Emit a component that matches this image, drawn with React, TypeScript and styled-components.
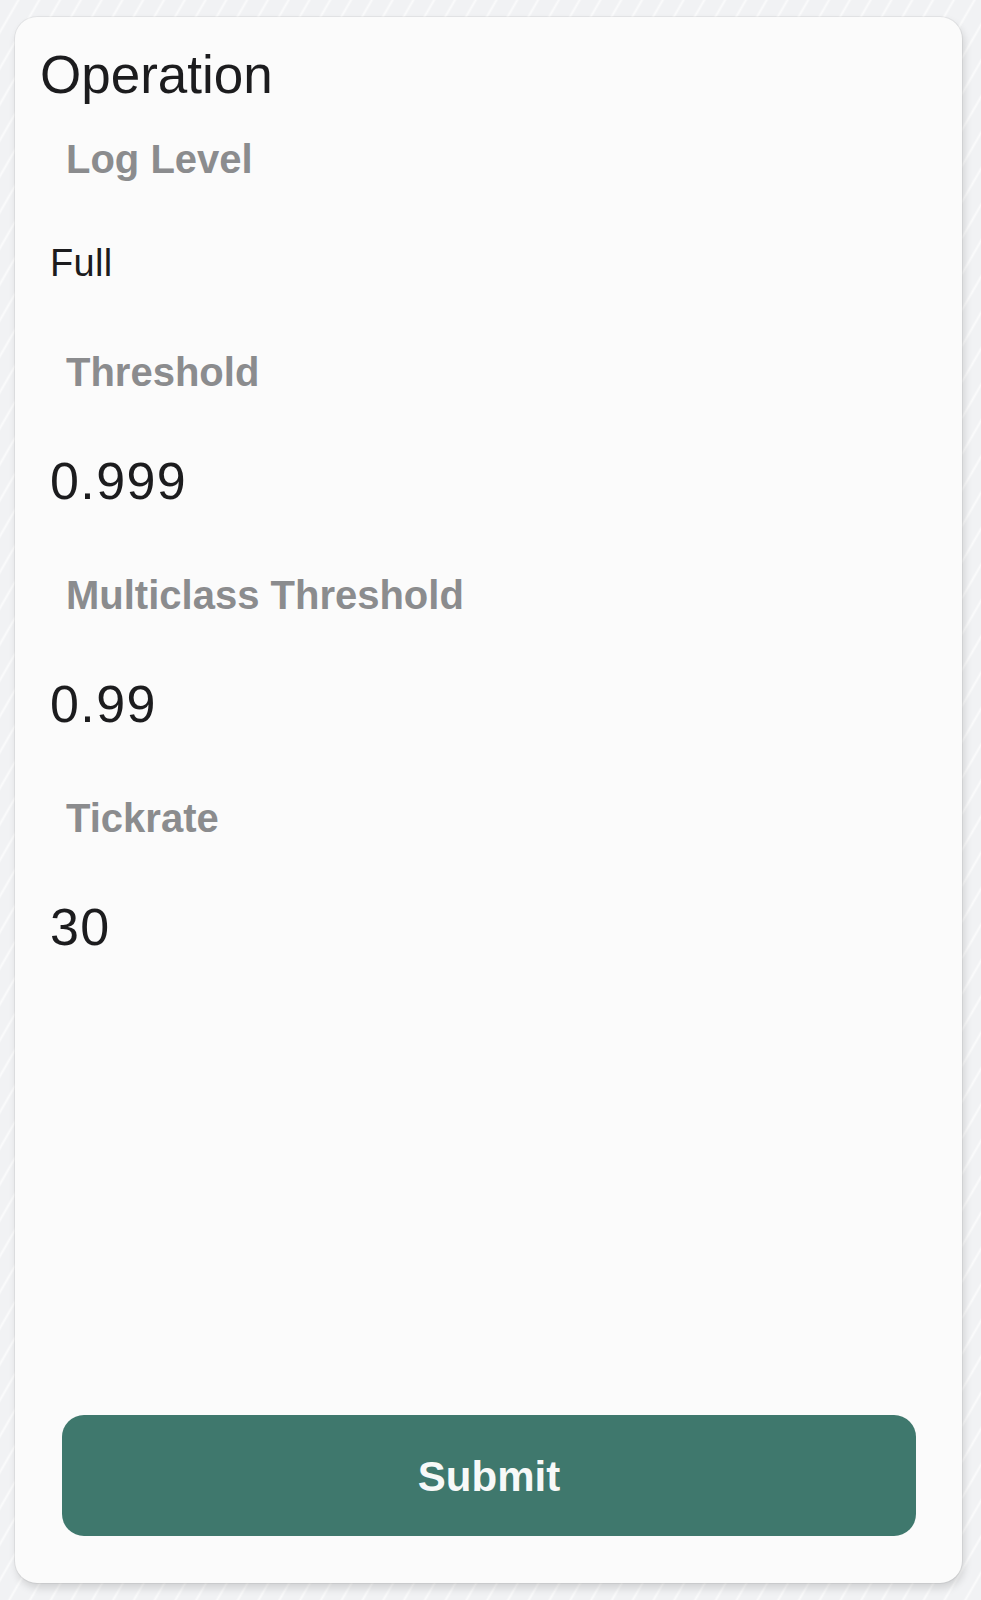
import styled, { createGlobalStyle } from 'styled-components';

const GlobalStyle = createGlobalStyle`
  html, body {
    margin: 0;
    padding: 0;
  }
  body {
    background-color: #f1f2f4;
    background-image: repeating-linear-gradient(
      120deg,
      rgba(255, 255, 255, 0) 0px,
      rgba(255, 255, 255, 0) 14px,
      rgba(255, 255, 255, 0.7) 16px,
      rgba(255, 255, 255, 0) 18px
    );
    font-family: 'Liberation Sans', Arial, sans-serif;
  }
`;

const Page = styled.div`
  padding: 17px 19px 17px 15px;
`;

const Card = styled.form`
  box-sizing: border-box;
  height: 1566px;
  display: flex;
  flex-direction: column;
  padding: 26px 23px 47px 25px;
  background: #fbfbfb;
  border-radius: 22px;
  box-shadow:
    0 0 0 1px rgba(0, 0, 0, 0.05),
    2px 5px 9px rgba(0, 0, 0, 0.14);
`;

const Title = styled.h2`
  margin: 0 0 28px;
  font-size: 53px;
  line-height: 64px;
  font-weight: 400;
  color: #1c1c1e;
`;

const Fields = styled.div`
  display: flex;
  flex-direction: column;
  gap: 58px;
  padding-left: 10px;
`;

const Field = styled.div`
  display: flex;
  flex-direction: column;
`;

const Label = styled.label`
  display: block;
  margin: 0 0 53px 16px;
  font-size: 40px;
  line-height: 48px;
  font-weight: 700;
  color: #8b8c8e;
`;

const Value = styled.div<{ $select?: boolean }>`
  font-size: ${(p) => (p.$select ? '38px' : '52px')};
  line-height: ${(p) => (p.$select ? '54px' : '64px')};
  letter-spacing: ${(p) => (p.$select ? '0.3px' : '1.4px')};
  color: #1c1c1e;
`;

const SubmitButton = styled.button`
  margin: auto 23px 0 22px;
  height: 121px;
  border: none;
  border-radius: 22px;
  background: #3f786d;
  color: #f7f9f8;
  font-family: 'Liberation Sans', Arial, sans-serif;
  font-size: 42px;
  font-weight: 700;
  padding-top: 4px;
  cursor: pointer;
`;

interface Setting {
  label: string;
  value: string;
  select?: boolean;
}

const SETTINGS: Setting[] = [
  { label: 'Log Level', value: 'Full', select: true },
  { label: 'Threshold', value: '0.999' },
  { label: 'Multiclass Threshold', value: '0.99' },
  { label: 'Tickrate', value: '30' },
];

export default function App(): JSX.Element {
  return (
    <>
      <GlobalStyle />
      <Page>
        <Card onSubmit={(e) => e.preventDefault()}>
          <Title>Operation</Title>
          <Fields>
            {SETTINGS.map((s) => (
              <Field key={s.label}>
                <Label>{s.label}</Label>
                <Value $select={s.select}>{s.value}</Value>
              </Field>
            ))}
          </Fields>
          <SubmitButton type="submit">Submit</SubmitButton>
        </Card>
      </Page>
    </>
  );
}
